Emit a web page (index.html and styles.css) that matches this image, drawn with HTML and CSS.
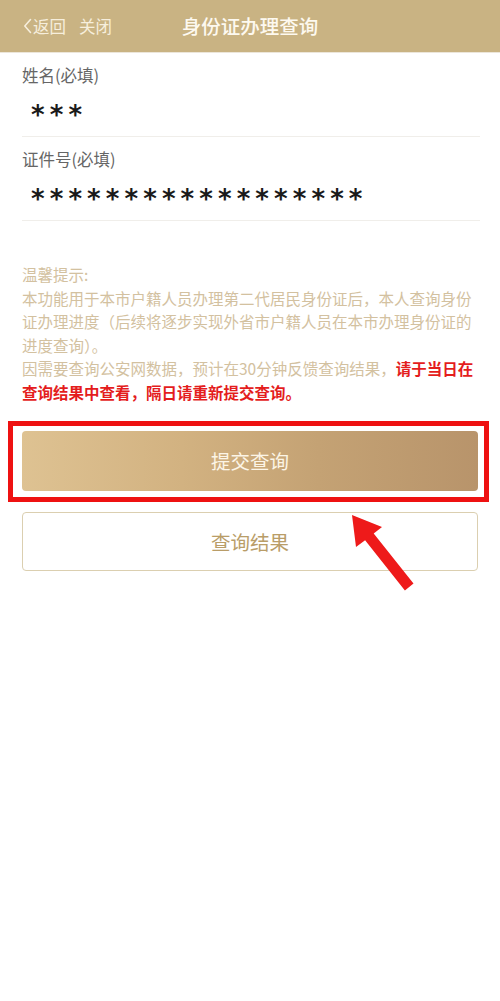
FILE: index.html
```html
<!DOCTYPE html>
<html lang="zh-CN">
<head>
<meta charset="utf-8">
<title>身份证办理查询</title>
<link rel="stylesheet" href="styles.css">
</head>
<body>
<div class="page">
  <header class="topbar">
    <div class="nav-left">
      <span class="back">
        <svg class="chev" width="9" height="16" viewBox="0 0 9 16"><path d="M7.5 1.5 L1.8 8 L7.5 14.5" fill="none" stroke="#f6eedc" stroke-width="1.6" stroke-linecap="round" stroke-linejoin="round"/></svg>返回
      </span>
      <span class="close">关闭</span>
    </div>
    <h1 class="title">身份证办理查询</h1>
  </header>

  <section class="form">
    <div class="field">
      <div class="label">姓名(必填)</div>
      <div class="value">***</div>
    </div>
    <div class="field">
      <div class="label">证件号(必填)</div>
      <div class="value">******************</div>
    </div>
  </section>

  <section class="tips">
    <p>温馨提示:</p>
    <p>本功能用于本市户籍人员办理第二代居民身份证后，本人查询身份证办理进度（后续将逐步实现外省市户籍人员在本市办理身份证的进度查询）。</p>
    <p>因需要查询公安网数据，预计在30分钟反馈查询结果，<strong class="warn">请于当日在查询结果中查看，隔日请重新提交查询。</strong></p>
  </section>

  <section class="actions">
    <div class="highlight">
      <button class="btn btn-primary">提交查询</button>
    </div>
    <button class="btn btn-outline">查询结果</button>
  </section>

  <svg class="arrow" width="80" height="90" viewBox="340 505 80 90">
    <polygon points="352,515 382,527 373.7,533.5 413.5,583.6 404.9,590.4 365.1,540.3 356,547" fill="#ee1a1a"/>
  </svg>
</div>
</body>
</html>
```
FILE: styles.css
```css
* { box-sizing: border-box; }
html, body { margin: 0; padding: 0; }
body {
  background: #ffffff;
  font-family: "Noto Sans CJK SC", "Noto Sans", sans-serif;
  width: 500px;
  height: 1001px;
  overflow: hidden;
}
.page { position: relative; }

.topbar {
  height: 53px;
  background: #c9b383;
  border-bottom: 1px solid #ece6da;
  position: relative;
  display: flex;
  align-items: center;
}
.nav-left {
  display: flex;
  align-items: center;
  padding-left: 23px;
  gap: 13px;
  color: #f6eedc;
  font-size: 16.5px;
}
.back { display: flex; align-items: center; }
.chev { margin-right: 1px; }
.title {
  position: absolute;
  left: 0; right: 0; top: 0;
  margin: 0;
  height: 52px;
  line-height: 52px;
  text-align: center;
  font-size: 19.5px;
  font-weight: 500;
  color: #fdf9f0;
  pointer-events: none;
}

.form { padding: 0 20px 0 22px; }
.field {
  border-bottom: 1px solid #f0eeea;
  padding: 10px 0 4px;
}
.label {
  font-size: 16.5px;
  line-height: 24px;
  color: #666666;
}
.value {
  margin-top: 9px;
  padding: 2px 0 0 9px;
  line-height: 34px;
  height: 36px;
  font-family: "DejaVu Sans", sans-serif;
  font-weight: 700;
  font-size: 26px;
  letter-spacing: 5.1px;
  color: #1a1a1a;
  white-space: nowrap;
}

.tips {
  margin-top: 42px;
  padding: 0 22px;
  color: #d3c1a0;
  font-size: 15.5px;
  line-height: 23.6px;
}
.tips p { margin: 0; }
.warn { color: #e41d1d; font-weight: 700; }

.actions {
  padding: 26px 22px 0;
  display: flex;
  flex-direction: column;
  gap: 21px;
}
.highlight { position: relative; }
.highlight::after {
  content: "";
  position: absolute;
  left: -14px; right: -11px; top: -10px; bottom: -11px;
  border: 5.5px solid #ee1111;
  pointer-events: none;
}
.btn {
  display: block;
  width: 100%;
  margin: 0;
  font-family: "Noto Sans CJK SC", sans-serif;
  font-size: 19.5px;
  border-radius: 4px;
  cursor: pointer;
}
.btn-primary {
  height: 60px;
  border: none;
  color: #fcf5e6;
  background: linear-gradient(to right, #dec292 0%, #d2b281 35%, #c4a274 65%, #b8946b 100%);
}
.btn-outline {
  height: 59px;
  background: #ffffff;
  border: 1px solid #dbcfb0;
  color: #b99d68;
}

.arrow {
  position: absolute;
  left: 340px;
  top: 505px;
}
```
